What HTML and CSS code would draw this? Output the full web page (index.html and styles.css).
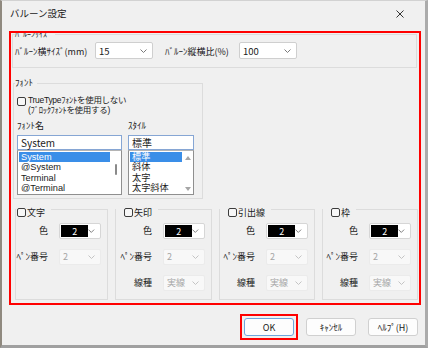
FILE: index.html
```html
<!DOCTYPE html>
<html lang="ja">
<head>
  <meta charset="UTF-8" />
  <title>バルーン設定</title>
  <link rel="stylesheet" href="styles.css">
</head>
<body>
  <div class="window">
    <div class="titlebar">
      <span class="title">バルーン設定</span>
      <svg class="close" width="8" height="8" viewBox="0 0 8 8"><path d="M0.5 0.5L7.5 7.5M7.5 0.5L0.5 7.5" stroke="#333" stroke-width="1" fill="none"/></svg>
    </div>

    <div class="panel">
      <fieldset class="group size-group">
        <legend>ﾊﾞﾙｰﾝｻｲｽﾞ</legend>
        <div class="size-row">
          <span class="size-label">ﾊﾞﾙｰﾝ横ｻｲｽﾞ(mm)</span>
          <div class="combo size-combo">
            <span>15</span>
            <svg class="chev" width="7" height="4" viewBox="0 0 7 4"><path d="M0.5 0.5L3.5 3.5L6.5 0.5"/></svg>
          </div>
          <span class="size-label ratio-label">ﾊﾞﾙｰﾝ縦横比(%)</span>
          <div class="combo size-combo">
            <span>100</span>
            <svg class="chev" width="7" height="4" viewBox="0 0 7 4"><path d="M0.5 0.5L3.5 3.5L6.5 0.5"/></svg>
          </div>
        </div>
      </fieldset>

      <fieldset class="group font-group">
        <legend>ﾌｫﾝﾄ</legend>
        <div class="check-row">
          <span class="checkbox"></span>
          <span class="check-text">TrueTypeﾌｫﾝﾄを使用しない<br>(ﾌﾞﾛｯｸﾌｫﾝﾄを使用する)</span>
        </div>
        <div class="font-cols">
          <div class="font-col">
            <div class="field-label">ﾌｫﾝﾄ名</div>
            <div class="edit">System</div>
            <div class="listbox">
              <ul class="items">
                <li class="selected">System</li>
                <li>@System</li>
                <li>Terminal</li>
                <li>@Terminal</li>
              </ul>
              <div class="scroll"><span class="thumb"></span></div>
            </div>
          </div>
          <div class="font-col">
            <div class="field-label">ｽﾀｲﾙ</div>
            <div class="edit">標準</div>
            <div class="listbox">
              <ul class="items">
                <li class="selected">標準</li>
                <li>斜体</li>
                <li>太字</li>
                <li>太字斜体</li>
              </ul>
              <div class="scroll arrows">
                <svg width="6" height="4" viewBox="0 0 6 4"><path d="M0 4L3 0L6 4Z"/></svg>
                <svg width="6" height="4" viewBox="0 0 6 4"><path d="M0 0L6 0L3 4Z"/></svg>
              </div>
            </div>
          </div>
        </div>
      </fieldset>

      <div class="pen-groups">
        <fieldset class="group pen-group first">
          <legend><span class="checkbox"></span>文字</legend>
          <span class="row-label">色</span>
          <div class="combo color-combo"><span class="swatch">2</span><svg class="chev" width="7" height="4" viewBox="0 0 7 4"><path d="M0.5 0.5L3.5 3.5L6.5 0.5"/></svg></div>
          <span class="row-label">ﾍﾟﾝ番号</span>
          <div class="combo off"><span>2</span><svg class="chev" width="7" height="4" viewBox="0 0 7 4"><path d="M0.5 0.5L3.5 3.5L6.5 0.5"/></svg></div>
        </fieldset>
        <fieldset class="group pen-group wide">
          <legend><span class="checkbox"></span>矢印</legend>
          <span class="row-label">色</span>
          <div class="combo color-combo"><span class="swatch">2</span><svg class="chev" width="7" height="4" viewBox="0 0 7 4"><path d="M0.5 0.5L3.5 3.5L6.5 0.5"/></svg></div>
          <span class="row-label">ﾍﾟﾝ番号</span>
          <div class="combo off"><span>2</span><svg class="chev" width="7" height="4" viewBox="0 0 7 4"><path d="M0.5 0.5L3.5 3.5L6.5 0.5"/></svg></div>
          <span class="row-label">線種</span>
          <div class="combo off"><span>実線</span><svg class="chev" width="7" height="4" viewBox="0 0 7 4"><path d="M0.5 0.5L3.5 3.5L6.5 0.5"/></svg></div>
        </fieldset>
        <fieldset class="group pen-group">
          <legend><span class="checkbox"></span>引出線</legend>
          <span class="row-label">色</span>
          <div class="combo color-combo"><span class="swatch">2</span><svg class="chev" width="7" height="4" viewBox="0 0 7 4"><path d="M0.5 0.5L3.5 3.5L6.5 0.5"/></svg></div>
          <span class="row-label">ﾍﾟﾝ番号</span>
          <div class="combo off"><span>2</span><svg class="chev" width="7" height="4" viewBox="0 0 7 4"><path d="M0.5 0.5L3.5 3.5L6.5 0.5"/></svg></div>
          <span class="row-label">線種</span>
          <div class="combo off"><span>実線</span><svg class="chev" width="7" height="4" viewBox="0 0 7 4"><path d="M0.5 0.5L3.5 3.5L6.5 0.5"/></svg></div>
        </fieldset>
        <fieldset class="group pen-group">
          <legend><span class="checkbox"></span>枠</legend>
          <span class="row-label">色</span>
          <div class="combo color-combo"><span class="swatch">2</span><svg class="chev" width="7" height="4" viewBox="0 0 7 4"><path d="M0.5 0.5L3.5 3.5L6.5 0.5"/></svg></div>
          <span class="row-label">ﾍﾟﾝ番号</span>
          <div class="combo off"><span>2</span><svg class="chev" width="7" height="4" viewBox="0 0 7 4"><path d="M0.5 0.5L3.5 3.5L6.5 0.5"/></svg></div>
          <span class="row-label">線種</span>
          <div class="combo off"><span>実線</span><svg class="chev" width="7" height="4" viewBox="0 0 7 4"><path d="M0.5 0.5L3.5 3.5L6.5 0.5"/></svg></div>
        </fieldset>
      </div>
    </div>

    <div class="buttons">
      <span class="mark"><button class="btn default">OK</button></span>
      <button class="btn">ｷｬﾝｾﾙ</button>
      <button class="btn">ﾍﾙﾌﾟ(H)</button>
    </div>
  </div>
</body>
</html>
```

FILE: styles.css
```css
body {
  margin: 0;
  font-family: "Noto Sans CJK JP", sans-serif;
  font-size: 9px;
  color: #1a1a1a;
  background: #f0f0f0;
}
.window {
  box-sizing: border-box;
  width: 428px;
  height: 348px;
  background: #f0f0f0;
  border-top: 1px solid #d2d2d2;
  border-left: 2px solid #8f897f;
  border-right: 3px solid #ababab;
  border-bottom: 3px solid #a0a0a0;
}
.titlebar {
  display: flex;
  justify-content: space-between;
  align-items: flex-start;
  height: 27px;
  box-sizing: border-box;
  padding: 6px 21px 0 8px;
}
.title {
  font-size: 9.5px;
  line-height: 12px;
}
.close {
  margin-top: 3px;
}

/* red annotation frame */
.panel {
  box-sizing: border-box;
  width: 412px;
  height: 274px;
  margin: 3px 0 0 7px;
  border: 2px solid #ff0000;
  overflow: hidden;
}
.group {
  border: 1px solid #dcdcdc;
  margin: 0;
  padding: 0;
  min-width: 0;
}
.group legend {
  padding: 0 4px 0 0;
  font-size: 9px;
  line-height: 10px;
}

.size-group {
  margin: -4px 2px 0 1px;
  padding: 3px 0 8px 2px;
}
.size-group legend {
  font-size: 8px;
}
.size-row {
  display: flex;
  align-items: center;
}
.size-label {
  width: 80px;
  line-height: 12px;
  padding-top: 2px;
  white-space: nowrap;
}
.ratio-label {
  width: 74px;
  margin-left: 12px;
}

.combo {
  box-sizing: border-box;
  display: flex;
  align-items: center;
  justify-content: space-between;
  background: #fff;
  border: 1px solid #cfcfcf;
  border-radius: 2px;
  padding: 0 5px 0 3px;
  height: 16px;
  font-size: 9.5px;
}
.size-combo {
  width: 58px;
  height: 17px;
}
.chev path {
  fill: none;
  stroke: #7a7a7a;
  stroke-width: 1;
}

.font-group {
  width: 190px;
  box-sizing: border-box;
  margin: 10px 0 0 2px;
  padding: 8px 7px 3px 3px;
}
.font-group legend {
  margin-left: -2px;
}
.check-row {
  display: flex;
  align-items: flex-start;
  gap: 2px;
}
.checkbox {
  display: inline-block;
  box-sizing: border-box;
  width: 9px;
  height: 9px;
  border: 1px solid #3c3c3c;
  border-radius: 2px;
  background: #f7f7f7;
}
.check-row .checkbox {
  margin-top: 1px;
}
.check-text {
  font-family: "Liberation Sans", "Noto Sans CJK JP", sans-serif;
  font-size: 8.5px;
  line-height: 9.8px;
  letter-spacing: -0.3px;
}
.font-cols {
  display: grid;
  grid-template-columns: 105px 66px;
  gap: 6px;
  margin-top: 4px;
}
.field-label {
  line-height: 11px;
  margin-bottom: 4px;
}
.edit {
  box-sizing: border-box;
  height: 15px;
  border: 1px solid #86a6d4;
  background: #fff;
  padding: 0 3px;
  font-size: 10px;
  line-height: 13px;
}
.listbox {
  box-sizing: border-box;
  display: flex;
  height: 45px;
  border: 1px solid #8f8f8f;
  border-top-color: #b4b4b4;
  background: #fff;
  padding: 1px 0 0 1px;
}
.items {
  list-style: none;
  margin: 0;
  padding: 0;
  flex: 1;
}
.items li {
  font-family: "Liberation Sans", "Noto Sans CJK JP", sans-serif;
  font-size: 9.2px;
  line-height: 10.5px;
  height: 10.5px;
  padding-left: 2px;
}
.items li.selected {
  background: #3a8ee8;
  color: #fff;
}
.scroll {
  width: 11px;
  display: flex;
  flex-direction: column;
  align-items: center;
}
.thumb {
  width: 2px;
  height: 11px;
  margin-top: 12px;
  background: #8a8a8a;
  border-radius: 1px;
}
.arrows {
  justify-content: space-between;
  padding: 4px 0 3px;
}
.arrows path {
  fill: #a6a6a6;
}

.pen-groups {
  display: flex;
  gap: 7px;
  margin: 1px 0 0 4px;
}
.pen-group {
  box-sizing: border-box;
  width: 96px;
  display: grid;
  grid-template-columns: 1fr 42px;
  grid-auto-rows: 16px;
  column-gap: 11px;
  row-gap: 10px;
  align-items: center;
  align-content: start;
  padding: 4px 6px 8px 0;
}
.pen-group.first {
  width: 93px;
}
.pen-group.wide {
  width: 97px;
}
.pen-group legend {
  display: flex;
  align-items: center;
  gap: 1px;
  padding: 7px 6px 0 8px;
  line-height: 12px;
}
.pen-group.first legend {
  padding-left: 1px;
}
.row-label {
  text-align: right;
  white-space: nowrap;
  line-height: 12px;
}
.color-combo {
  padding: 1px 5px 1px 1px;
  border-color: #d6d6d6;
}
.swatch {
  width: 29px;
  height: 100%;
  background: #000;
  color: #fff;
  text-align: center;
  font-size: 9px;
  line-height: 14px;
}
.combo.off {
  background: #f8f8f8;
  border-color: #ebebeb;
  color: #a5a5a5;
  font-size: 9px;
}
.combo.off .chev path {
  stroke: #c4c4c4;
}

.buttons {
  display: flex;
  justify-content: flex-end;
  gap: 12px;
  padding: 13px 7px 0 0;
}
.btn {
  box-sizing: border-box;
  width: 50px;
  height: 18px;
  padding: 0;
  background: #fdfdfd;
  border: 1px solid #d0d0d0;
  border-radius: 3px;
  font-family: "Noto Sans CJK JP", sans-serif;
  font-size: 9px;
  color: #1a1a1a;
}
.btn.default {
  border-color: #6ea6dc;
}
.mark {
  display: flex;
  outline: 2px solid #ff0000;
  outline-offset: 2px;
}
```
